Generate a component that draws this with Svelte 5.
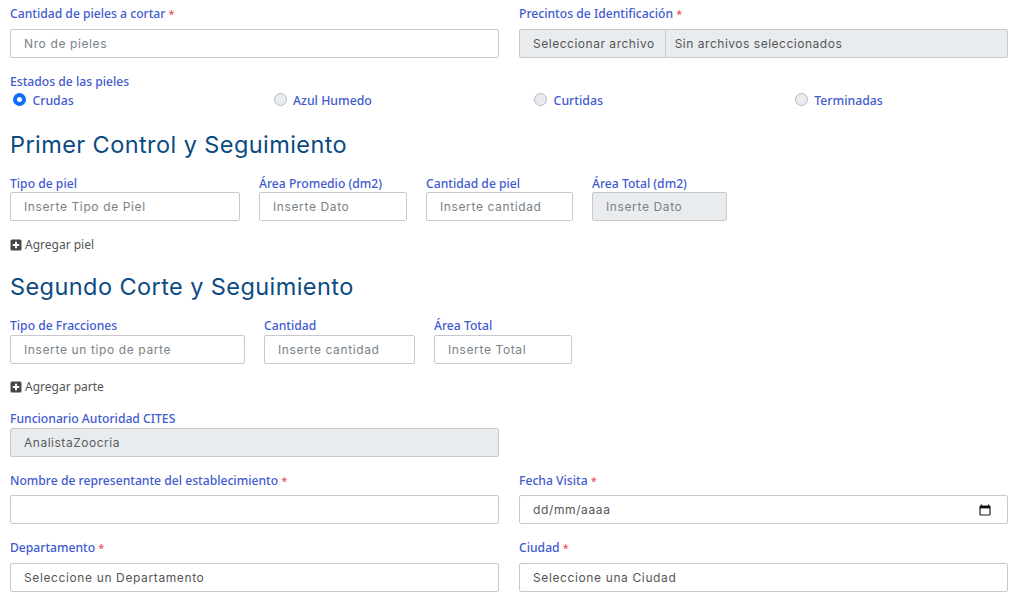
<script>
  const estados = ['Crudas', 'Azul Humedo', 'Curtidas', 'Terminadas'];
  const pieles = [
    { label: 'Tipo de piel', ph: 'Inserte Tipo de Piel', w: 230 },
    { label: 'Área Promedio (dm2)', ph: 'Inserte Dato', w: 148 },
    { label: 'Cantidad de piel', ph: 'Inserte cantidad', w: 147 },
    { label: 'Área Total (dm2)', ph: 'Inserte Dato', w: 135, disabled: true }
  ];
  const partes = [
    { label: 'Tipo de Fracciones', ph: 'Inserte un tipo de parte', w: 235 },
    { label: 'Cantidad', ph: 'Inserte cantidad', w: 151 },
    { label: 'Área Total', ph: 'Inserte Total', w: 138 }
  ];
</script>

<div class="page">
  <div class="two first">
    <div>
      <label class="lbl" for="nro">Cantidad de pieles a cortar <span class="req">*</span></label>
      <input id="nro" class="ctl" placeholder="Nro de pieles" />
    </div>
    <div>
      <div class="lbl">Precintos de Identificación <span class="req">*</span></div>
      <div class="file ctl">
        <span class="file-btn">Seleccionar archivo</span>
        <span class="file-name">Sin archivos seleccionados</span>
      </div>
    </div>
  </div>

  <div class="lbl estados">Estados de las pieles</div>
  <div class="radios">
    {#each estados as e, i}
      <label class="radio">
        <input type="radio" name="estado" checked={i === 0} />
        <span>{e}</span>
      </label>
    {/each}
  </div>

  <h2 class="h-one">Primer Control y Seguimiento</h2>
  <div class="fields">
    {#each pieles as f}
      <div style="width:{f.w}px">
        <div class="lbl flush">{f.label}</div>
        <input class="ctl" placeholder={f.ph} disabled={f.disabled} />
      </div>
    {/each}
  </div>
  <div class="add">
    <svg viewBox="0 0 12 12" width="12" height="12"><rect x="0.5" y="0.5" width="11" height="11" rx="1.6" fill="#4a4545"/><path d="M6 2.8v6.4M2.8 6h6.4" stroke="#fff" stroke-width="1.9"/></svg>
    <span>Agregar piel</span>
  </div>

  <h2 class="h-two">Segundo Corte y Seguimiento</h2>
  <div class="fields">
    {#each partes as f}
      <div style="width:{f.w}px">
        <div class="lbl tight">{f.label}</div>
        <input class="ctl" placeholder={f.ph} />
      </div>
    {/each}
  </div>
  <div class="add add-two">
    <svg viewBox="0 0 12 12" width="12" height="12"><rect x="0.5" y="0.5" width="11" height="11" rx="1.6" fill="#4a4545"/><path d="M6 2.8v6.4M2.8 6h6.4" stroke="#fff" stroke-width="1.9"/></svg>
    <span>Agregar parte</span>
  </div>

  <div class="two func">
    <div>
      <div class="lbl tight">Funcionario Autoridad CITES</div>
      <input class="ctl tighter" value="AnalistaZoocria" disabled />
    </div>
  </div>

  <div class="two nombre">
    <div>
      <label class="lbl mid" for="rep">Nombre de representante del establecimiento <span class="req">*</span></label>
      <input id="rep" class="ctl" />
    </div>
    <div>
      <label class="lbl mid" for="fecha">Fecha Visita <span class="req">*</span></label>
      <div class="ctl date">
        <span>dd/mm/aaaa</span>
        <svg viewBox="0 0 12 12" width="12" height="12"><path d="M2.5 0.5v2M9.5 0.5v2" stroke="#111" stroke-width="1.2"/><rect x="1" y="2" width="10" height="9" rx="0.8" fill="none" stroke="#222" stroke-width="1.2"/><rect x="1" y="2" width="10" height="2.4" fill="#111"/></svg>
      </div>
    </div>
  </div>

  <div class="two depto">
    <div>
      <div class="lbl mid2">Departamento <span class="req">*</span></div>
      <div class="ctl select">Seleccione un Departamento</div>
    </div>
    <div>
      <div class="lbl mid2">Ciudad <span class="req">*</span></div>
      <div class="ctl select">Seleccione una Ciudad</div>
    </div>
  </div>
</div>

<style>
  :global(body) {
    margin: 0;
    background: #fff;
  }
  .page {
    padding: 0 12px 0 10px;
    height: 601px;
    box-sizing: border-box;
    overflow: hidden;
    font-family: "Noto Sans", sans-serif;
  }
  .two {
    display: grid;
    grid-template-columns: 489px 489px;
    column-gap: 20px;
  }
  .first { padding-top: 5px; }
  .lbl {
    display: block;
    font-size: 12.15px;
    line-height: 17px;
    color: #3f5bd0;
    margin-bottom: 7px;
    font-weight: 500;
  }
  .flush { margin-bottom: 0; }
  .tight { margin-bottom: 1px; }
  .mid { margin-bottom: 6px; }
  .mid2 { margin-bottom: 7px; }
  .req { color: #f0505a; font-size: 11px; }
  .ctl {
    display: block;
    width: 100%;
    height: 29px;
    box-sizing: border-box;
    border: 1px solid #c9c9c9;
    border-radius: 2px;
    padding: 0 13px;
    font-family: Inter, sans-serif;
    font-size: 12px;
    letter-spacing: 0.62px;
    color: #4b4b4b;
    background: #fff;
    outline: none;
  }
  .ctl::placeholder { color: #7a8289; opacity: 1; }
  .ctl:disabled { background: #e9ecef; color: #5c5c5c; opacity: 1; }
  .tighter { letter-spacing: 0.52px; }
  .file {
    display: flex;
    align-items: center;
    padding: 0;
    background: #e9ecef;
    color: #555;
    letter-spacing: 0.52px;
  }
  .file-btn {
    padding: 0 10px 0 13px;
    height: 100%;
    display: flex;
    align-items: center;
    border-right: 1px solid #c9c9c9;
  }
  .file-name { padding-left: 9px; }
  .estados { margin: 15px 0 0; }
  .radios {
    display: grid;
    grid-template-columns: repeat(4, 260.6px);
    height: 19px;
  }
  .radio {
    display: flex;
    align-items: center;
    font-size: 12.3px;
    color: #3f5bd0;
    font-weight: 500;
    padding: 1px 0 0 3px;
  }
  .radio input {
    appearance: none;
    width: 13px;
    height: 13px;
    margin: -2px 6.4px 0 0;
    border-radius: 50%;
    border: 1px solid #b5b9bd;
    background: #e9ecef;
  }
  .radio input:checked {
    border: 4px solid #0d6efd;
    background: #fff;
  }
  h2 {
    font-family: Inter, sans-serif;
    font-weight: 400;
    font-size: 23.5px;
    letter-spacing: 0.42px;
    line-height: 30px;
    color: #0b4a82;
    margin: 0;
  }
  .h-one { margin: 21px 0 15px; }
  .h-two { margin: 19px 0 15px; }
  .fields {
    display: flex;
    gap: 19px;
  }
  .add {
    display: flex;
    align-items: center;
    gap: 3px;
    height: 17px;
    margin-top: 15px;
    font-size: 12px;
    color: #555;
  }
  .add-two { margin-top: 14px; }
  .func { margin-top: 15px; }
  .nombre { margin-top: 15px; }
  .depto { margin-top: 15px; }
  .date {
    display: flex;
    align-items: center;
    justify-content: space-between;
    padding-right: 16px;
    color: #555;
  }
  .select {
    display: flex;
    align-items: center;
    color: #555;
  }
</style>
